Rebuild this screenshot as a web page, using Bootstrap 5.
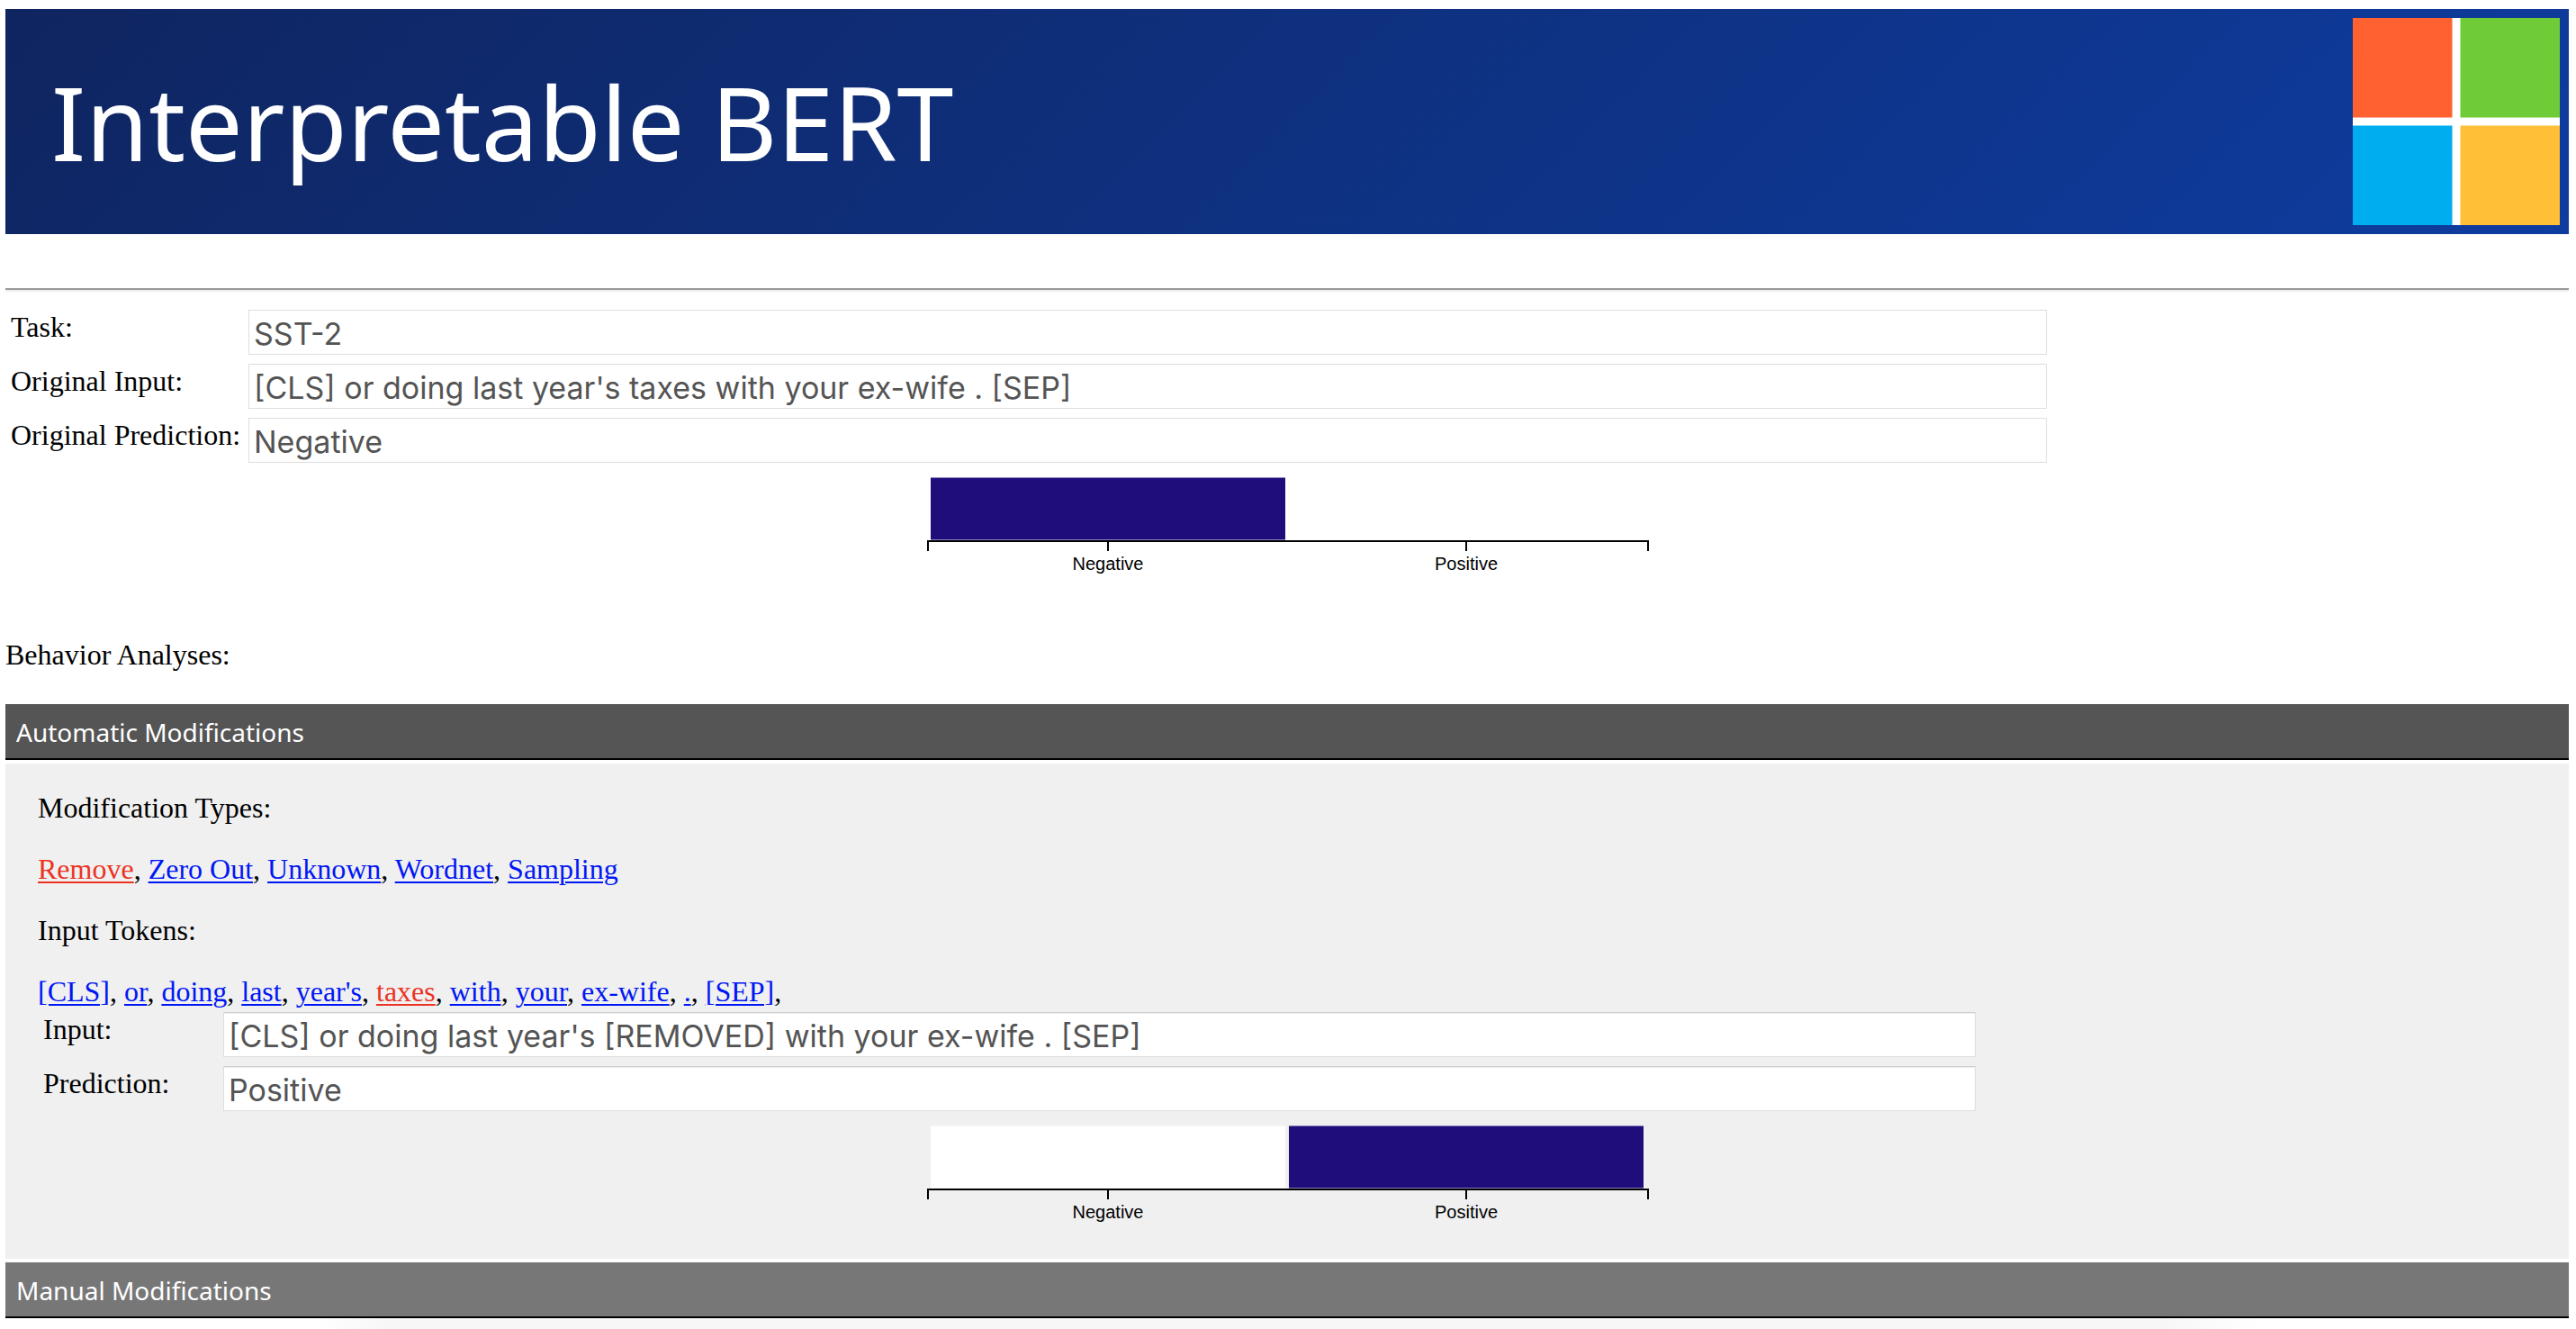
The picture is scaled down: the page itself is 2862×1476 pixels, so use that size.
<!DOCTYPE html>
<html lang="en">
<head>
<meta charset="utf-8">
<meta name="viewport" content="width=device-width, initial-scale=1">
<title>Interpretable BERT</title>
<link href="https://cdn.jsdelivr.net/npm/bootstrap@5.3.0/dist/css/bootstrap.min.css" rel="stylesheet">
<style>
body { font-family: "Liberation Serif", serif; font-size: 32px; line-height: 36px; color: #000; padding: 10px 8px 0 6px; min-height: 100vh; }
p { margin-bottom: 32px; }
a { color: #0017f5; text-decoration-thickness: 2px; text-underline-offset: 3px; }
a.picked { color: #ec3323; }
.banner { height: 250px; padding: 10px 10px 10px 51px; background: linear-gradient(135deg, #0f2560, #0e3c9f); }
.banner h1 { font-family: "Noto Sans", sans-serif; font-size: 113px; font-weight: 400; line-height: 160px; }
.rule { height: 4px; margin: 60px 0 20px; background: #eee; border-top: 2px solid #9a9a9a; opacity: 1; }
.fields { gap: 10px; }
.field-line label { width: 270px; padding: 1px 0 0 6px; }
.field-line input { width: calc(70% + 4px); height: 50px; padding: 2px 5px 0; border: 1px solid #dedede; background: #fff; color: #545454; font-family: Inter, sans-serif; font-size: 34px; line-height: 46px; }
.inner .field-line label { width: 206px; }
.inner .field-line input { border-top-color: #cfcfcf; box-shadow: inset 0 1px #eee; }
.chart { overflow: visible; margin: 16px auto 0; font-family: "Liberation Sans", sans-serif; font-size: 20px; }
.caption-line { margin: 69px 0 37px; }
.section-bar { height: 62px; padding: 2px 12px 0; border: 0; border-bottom: 2px solid #000; background: #777; color: #fff; font-family: "Noto Sans", sans-serif; font-size: 28px; line-height: 58px; text-align: left; }
.section-bar.opened { background: #555; }
.inner { margin: 4px 0; padding: 31px 36px 38px; background: #f0f0f0; }
.token-line { margin-bottom: 5px; }
.shade { height: 12px; background: linear-gradient(90deg, #fff 12%, #f7f7f7 15%, #f7f7f7 84%, #fff 88%); }
</style>
<script defer src="https://cdn.jsdelivr.net/npm/bootstrap@5.3.0/dist/js/bootstrap.bundle.min.js"></script>
</head>
<body>
<header class="banner d-flex align-items-center justify-content-between">
  <h1 class="text-white mb-0">Interpretable BERT</h1>
  <svg width="230" height="230" viewBox="0 0 230 230" role="img" aria-label="Logo">
    <path fill="#fff" d="M0 0h230v230H0z"/>
    <path fill="#ff6130" d="M0 0h110.500v110.500H0z"/>
    <path fill="#6fcb36" d="M119.500 0H230v110.500H119.500z"/>
    <path fill="#00adef" d="M0 119.500h110.500V230H0z"/>
    <path fill="#ffbf37" d="M119.500 119.500H230V230H119.500z"/>
  </svg>
</header>
<hr class="rule">
<main>
  <section class="fields d-flex flex-column">
    <div class="field-line d-flex align-items-start"><label class="flex-shrink-0" for="task">Task:</label><input class="flex-shrink-0" id="task" type="text" value="SST-2" readonly></div>
    <div class="field-line d-flex align-items-start"><label class="flex-shrink-0" for="oinput">Original Input:</label><input class="flex-shrink-0" id="oinput" type="text" value="[CLS] or doing last year's taxes with your ex-wife . [SEP]" readonly></div>
    <div class="field-line d-flex align-items-start"><label class="flex-shrink-0" for="opred">Original Prediction:</label><input class="flex-shrink-0" id="opred" type="text" value="Negative" readonly></div>
  </section>
  <svg class="chart d-block" width="800" height="110" viewBox="0 0 800 110">
    <path fill="#1f0d7c" d="M4 .5h394v69H4z"/>
    <path fill="none" stroke="#000" stroke-width="2" d="M1 82V71h800v11M201 71v11M599 71v11"/>
    <text x="201" y="103" text-anchor="middle">Negative</text>
    <text x="599" y="103" text-anchor="middle">Positive</text>
  </svg>
  <p class="caption-line">Behavior Analyses:</p>
  <button class="section-bar opened d-block w-100" type="button" data-bs-toggle="collapse" data-bs-target="#auto" aria-expanded="true">Automatic Modifications</button>
  <div class="collapse show" id="auto">
    <div class="inner">
      <p>Modification Types:</p>
      <p><a class="picked" href="#remove">Remove</a>, <a href="#zero">Zero Out</a>, <a href="#unknown">Unknown</a>, <a href="#wordnet">Wordnet</a>, <a href="#sampling">Sampling</a></p>
      <p>Input Tokens:</p>
      <p class="token-line"><a href="#t0">[CLS]</a>, <a href="#t1">or</a>, <a href="#t2">doing</a>, <a href="#t3">last</a>, <a href="#t4">year's</a>, <a class="picked" href="#t5">taxes</a>, <a href="#t6">with</a>, <a href="#t7">your</a>, <a href="#t8">ex-wife</a>, <a href="#t9">.</a>, <a href="#t10">[SEP]</a>,</p>
      <div class="fields d-flex flex-column">
        <div class="field-line d-flex align-items-start"><label class="flex-shrink-0" for="minput">Input:</label><input class="flex-shrink-0" id="minput" type="text" value="[CLS] or doing last year's [REMOVED] with your ex-wife . [SEP]" readonly></div>
        <div class="field-line d-flex align-items-start"><label class="flex-shrink-0" for="mpred">Prediction:</label><input class="flex-shrink-0" id="mpred" type="text" value="Positive" readonly></div>
      </div>
      <svg class="chart d-block" width="800" height="110" viewBox="0 0 800 110">
        <path fill="#fff" d="M4 .5h394v69H4z"/>
        <path fill="#1f0d7c" d="M402 .5h394v69H402z"/>
        <path fill="none" stroke="#000" stroke-width="2" d="M1 82V71h800v11M201 71v11M599 71v11"/>
        <text x="201" y="103" text-anchor="middle">Negative</text>
        <text x="599" y="103" text-anchor="middle">Positive</text>
      </svg>
    </div>
  </div>
  <button class="section-bar d-block w-100" type="button">Manual Modifications</button>
  <div class="shade"></div>
</main>
</body>
</html>
